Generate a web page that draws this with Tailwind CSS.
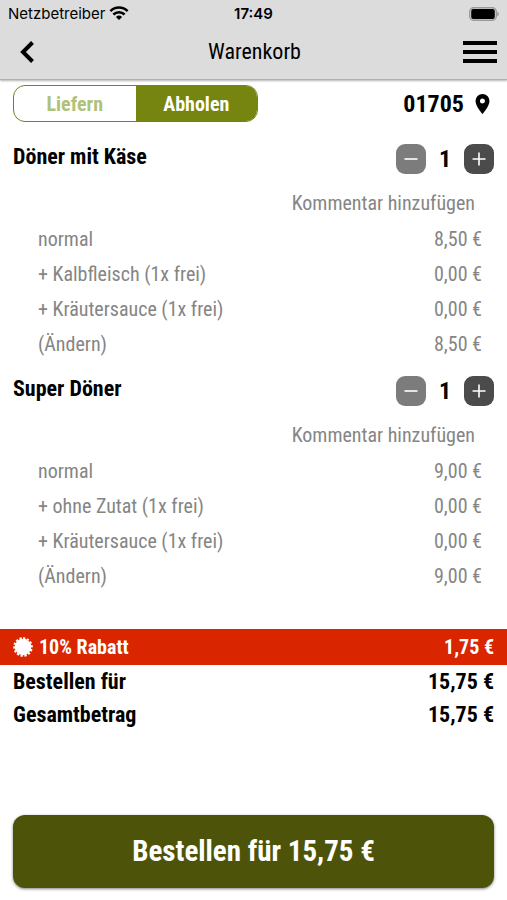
<!DOCTYPE html>
<html lang="de">
<head>
<meta charset="utf-8">
<meta name="viewport" content="width=device-width, initial-scale=1">
<title>Warenkorb</title>
<script src="https://cdn.jsdelivr.net/npm/@tailwindcss/browser@4"></script>
</head>
<body class="min-h-screen flex flex-col bg-white text-black font-['Roboto_Condensed','Roboto',sans-serif]">
<header class="bg-[#dcdcdc] border-b border-[#b0b0b0] shadow-[0_1px_2px_rgba(0,0,0,0.3)]">
  <div class="grid grid-cols-3 items-center h-7 px-2 font-['Inter',sans-serif] text-[15px]">
    <div class="flex items-center gap-1"><span>Netzbetreiber</span>
      <svg class="w-5 h-[14px] shrink-0 -translate-y-px" viewBox="0 0 18 13" fill="none" stroke="#000" stroke-width="2.400" aria-hidden="true"><path d="M1 4.700A11.500 11.500 0 0 1 17 4.700M3.800 7.900A7.500 7.500 0 0 1 14.200 7.900"/><path d="M9 13L6.100 10.300A4.200 4.200 0 0 1 11.900 10.300Z" fill="#000" stroke="none"/></svg>
    </div>
    <div class="text-center font-semibold">17:49</div>
    <svg class="justify-self-end w-[30px] h-[14px]" viewBox="0 0 30 14" aria-hidden="true"><rect x=".7" y=".7" width="26.600" height="12.600" rx="4" fill="#dcdcdc" stroke="#999" stroke-width="1.400"/><rect x="2.200" y="2" width="23.600" height="10" rx="2" fill="#000"/><path d="M28.200 4.800Q30 5.500 30 7T28.200 9.200Z" fill="#999"/></svg>
  </div>
  <div class="grid grid-cols-[40px_1fr_40px] items-center h-[51px] pb-1 pl-[9px] pr-[7px]">
    <button type="button" aria-label="Zurück" class="flex items-center h-10 pl-1"><svg class="w-7 h-7" viewBox="0 0 28 28" fill="none" stroke="#000" stroke-width="4"><path d="M19.500 4.500L10 14L19.500 23.500"/></svg></button>
    <h1 class="text-center text-[22px] leading-7">Warenkorb</h1>
    <button type="button" aria-label="Menü" class="flex items-center justify-center h-10"><svg class="w-[34px] h-[22px]" viewBox="0 0 34 22"><path d="M0 0h34v4H0zM0 9h34v4H0zM0 18h34v4H0z"/></svg></button>
  </div>
</header>
<main class="flex flex-col grow">
  <div class="flex items-center justify-between px-[13px] pt-[5px]">
    <div class="flex w-[245px] h-[37px] rounded-xl border border-[#76850f] overflow-hidden text-xl leading-[34px] font-bold">
      <button type="button" aria-pressed="false" class="flex-1 text-[#b0c17a]">Liefern</button>
      <button type="button" aria-pressed="true" class="flex-1 bg-[#76850f] text-white">Abholen</button>
    </div>
    <button type="button" class="flex items-center gap-[11px] pr-1 text-2xl font-bold"><span>01705</span>
      <svg class="w-[15px] h-5" viewBox="0 0 14 20" aria-hidden="true"><path fill-rule="evenodd" d="M7 0a7 7 0 0 0-7 7c0 5.200 7 13 7 13s7-7.800 7-13a7 7 0 0 0-7-7zm0 9.500a2.500 2.500 0 1 1 0-5 2.500 2.500 0 0 1 0 5z"/></svg>
    </button>
  </div>

  <div class="flex flex-col gap-[14px] pt-[22px]">
    <article>
      <div class="flex justify-between px-[13px]">
        <h2 class="text-[22px] leading-[26px] font-bold">Döner mit Käse</h2>
        <div class="flex items-center">
          <button type="button" aria-label="Weniger" class="flex items-center justify-center w-[30px] h-[30px] rounded-[9px] bg-[#7c7c7c]"><svg class="w-4 h-4" viewBox="0 0 16 16" stroke="#fff" stroke-width="1.600"><path d="M1.500 8h13"/></svg></button>
          <output class="w-[38px] text-center text-2xl leading-[30px] font-bold">1</output>
          <button type="button" aria-label="Mehr" class="flex items-center justify-center w-[30px] h-[30px] rounded-[9px] bg-[#4b4b4b]"><svg class="w-4 h-4" viewBox="0 0 16 16" stroke="#fff" stroke-width="1.600"><path d="M1.500 8h13M8 1.500v13"/></svg></button>
        </div>
      </div>
      <div class="mt-3 pr-8 text-right text-[#858585] text-xl leading-[35px]"><button type="button">Kommentar hinzufügen</button></div>
      <div class="mt-px pl-[38px] pr-[25px] text-[#858585] text-xl leading-[35px]">
        <table class="w-full">
          <tbody>
          <tr><td class="p-0">normal</td><td class="p-0 text-right">8,50 €</td></tr>
          <tr><td class="p-0">+ Kalbfleisch (1x frei)</td><td class="p-0 text-right">0,00 €</td></tr>
          <tr><td class="p-0">+ Kräutersauce (1x frei)</td><td class="p-0 text-right">0,00 €</td></tr>
          <tr><td class="p-0"><button type="button">(Ändern)</button></td><td class="p-0 text-right">8,50 €</td></tr>
          </tbody>
        </table>
      </div>
    </article>
    <article>
      <div class="flex justify-between px-[13px]">
        <h2 class="text-[22px] leading-[26px] font-bold">Super Döner</h2>
        <div class="flex items-center">
          <button type="button" aria-label="Weniger" class="flex items-center justify-center w-[30px] h-[30px] rounded-[9px] bg-[#7c7c7c]"><svg class="w-4 h-4" viewBox="0 0 16 16" stroke="#fff" stroke-width="1.600"><path d="M1.500 8h13"/></svg></button>
          <output class="w-[38px] text-center text-2xl leading-[30px] font-bold">1</output>
          <button type="button" aria-label="Mehr" class="flex items-center justify-center w-[30px] h-[30px] rounded-[9px] bg-[#4b4b4b]"><svg class="w-4 h-4" viewBox="0 0 16 16" stroke="#fff" stroke-width="1.600"><path d="M1.500 8h13M8 1.500v13"/></svg></button>
        </div>
      </div>
      <div class="mt-3 pr-8 text-right text-[#858585] text-xl leading-[35px]"><button type="button">Kommentar hinzufügen</button></div>
      <div class="mt-px pl-[38px] pr-[25px] text-[#858585] text-xl leading-[35px]">
        <table class="w-full">
          <tbody>
          <tr><td class="p-0">normal</td><td class="p-0 text-right">9,00 €</td></tr>
          <tr><td class="p-0">+ ohne Zutat (1x frei)</td><td class="p-0 text-right">0,00 €</td></tr>
          <tr><td class="p-0">+ Kräutersauce (1x frei)</td><td class="p-0 text-right">0,00 €</td></tr>
          <tr><td class="p-0"><button type="button">(Ändern)</button></td><td class="p-0 text-right">9,00 €</td></tr>
          </tbody>
        </table>
      </div>
    </article>
  </div>

  <section class="mt-[35px]" aria-label="Summe">
    <div class="flex items-center justify-between h-9 px-[13px] bg-[#d92500] text-white text-xl font-bold">
      <span class="flex items-center gap-[6px]">
        <svg class="w-5 h-5" viewBox="-10 -10 20 20" fill="#fff" aria-hidden="true"><circle r="8.300"/><path fill="none" stroke="#fff" stroke-width="2" stroke-dasharray="2.300 1.649" d="M0-8.800A8.800 8.800 0 1 1 0 8.800A8.800 8.800 0 1 1 0-8.800"/></svg>
        <span>10% Rabatt</span>
      </span>
      <span>1,75 €</span>
    </div>
    <dl class="px-[13px] text-[22px] leading-[33px] font-bold">
      <div class="flex justify-between"><dt>Bestellen für</dt><dd>15,75 €</dd></div>
      <div class="flex justify-between"><dt>Gesamtbetrag</dt><dd>15,75 €</dd></div>
    </dl>
  </section>
  <div class="mt-auto px-[13px] pb-3">
    <button type="button" class="w-full h-[73px] rounded-xl bg-[#4d540a] text-white text-[29px] font-bold shadow-[0_1px_3px_rgba(0,0,0,0.5)]">Bestellen für 15,75 €</button>
  </div>
</main>
</body>
</html>
